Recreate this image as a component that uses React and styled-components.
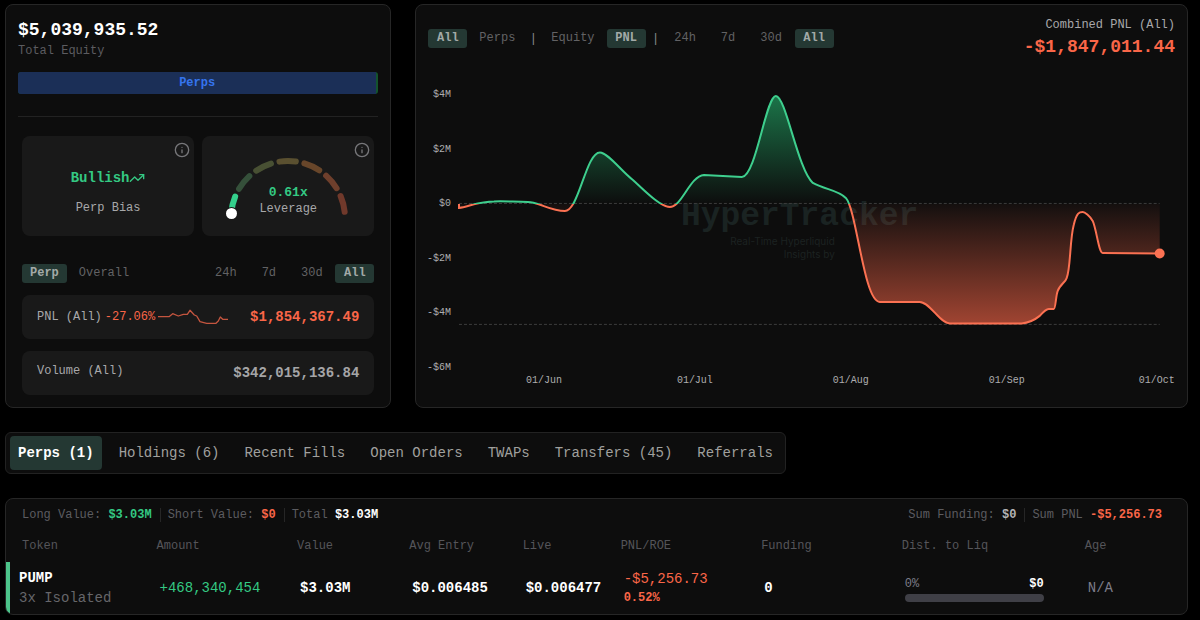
import React, { useState } from "react";
import styled, { createGlobalStyle } from "styled-components";
import { Info, TrendingUp } from "lucide-react";

const GlobalStyle = createGlobalStyle`
  * {
    box-sizing: border-box;
  }

  body {
    margin: 0;
    background: #000;
    color: #fff;
    font-family: "Liberation Mono", "DejaVu Sans Mono", monospace;
    font-size: 12px;
  }

  button {
    font-family: inherit;
    border: 0;
    background: none;
    cursor: pointer;
  }
`;

const GREEN = "#34c983";
const RED = "#fa6648";

const Page = styled.main`
  display: flex;
  flex-direction: column;
  align-items: flex-start;
  gap: 24px;
  padding: 4px 12px 4px 5px;
`;

const Top = styled.section`
  width: 100%;
  display: grid;
  grid-template-columns: 1fr 2fr;
  gap: 24px;

  @media (max-width: 900px) {
    grid-template-columns: 1fr;
  }
`;

const Card = styled.div`
  background: #0d0d0d;
  border: 1px solid #262626;
  border-radius: 8px;
  min-width: 0;
`;

const EquityCard = styled(Card)`
  padding: 12px;
`;

const BigValue = styled.div`
  font-size: 18px;
  line-height: 26px;
  font-weight: 700;
  color: ${(p) => p.$color || "#fff"};
`;

const Caption = styled.div`
  font-size: 12px;
  line-height: ${(p) => p.$line || 16}px;
  color: ${(p) => p.$color || "#5c5c60"};
`;

const SplitBar = styled.div`
  display: flex;
  height: 22px;
  margin-top: 13px;
  border-radius: 3px;
  overflow: hidden;
  background: #14532d;
`;

const SplitPart = styled.div`
  flex: 1;
  margin-right: 2px;
  line-height: 22px;
  text-align: center;
  font-weight: 700;
  color: #3574ee;
  background: #1b2f57;
`;

const Divider = styled.hr`
  height: 1px;
  margin: 22px 0 19px;
  border: 0;
  background: #222;
`;

const Inner = styled.div`
  padding: 0 4px;
`;

const Tiles = styled.div`
  display: grid;
  grid-template-columns: 1fr 1fr;
  gap: 8px;
`;

const Tile = styled.div`
  position: relative;
  height: 100px;
  padding-top: ${(p) => p.$top}px;
  display: flex;
  flex-direction: column;
  align-items: center;
  gap: 10px;
  border-radius: 8px;
  background: #191919;
`;

const TileInfo = styled(Info)`
  position: absolute;
  top: 6px;
  right: 4px;
  color: #77777a;
`;

const Bias = styled.div`
  display: flex;
  align-items: center;
  font-size: 14px;
  line-height: 20px;
  font-weight: 700;
  color: ${GREEN};
`;

const Gauge = styled.div`
  display: grid;
  justify-items: center;

  > * {
    grid-area: 1 / 1;
  }
`;

const GaugeText = styled.div`
  align-self: end;
  padding-bottom: 3px;
  text-align: center;
`;

const GaugeValue = styled.div`
  font-size: 13px;
  line-height: 16px;
  font-weight: 700;
  color: ${GREEN};
`;

const Toggles = styled.div`
  display: flex;
  justify-content: space-between;
  margin: 28px 0 12px;
`;

const Group = styled.div`
  display: flex;
  align-items: center;
  gap: 4px;
`;

const Pill = styled.button`
  min-width: 39px;
  height: 19px;
  padding: 0 8px;
  border-radius: 3px;
  font-size: 12px;
  line-height: 19px;
  font-weight: ${(p) => (p.$active ? 700 : 400)};
  color: ${(p) => (p.$active ? "#a3aaa8" : "#626264")};
  background: ${(p) => (p.$active ? "#243833" : "transparent")};
`;

const Bar = styled.span`
  width: 12px;
  text-align: center;
  color: #8a8a8c;
`;

const Stat = styled.div`
  display: flex;
  align-items: ${(p) => p.$align || "center"};
  height: 44px;
  padding: 10px 15px;
  border-radius: 8px;
  background: #191919;

  & + & {
    margin-top: 12px;
  }
`;

const StatLabel = styled.span`
  line-height: 20px;
  color: #a8a8aa;
`;

const StatChange = styled.span`
  margin: 0 3px;
  color: ${RED};
`;

const StatValue = styled.span`
  margin-left: auto;
  font-size: 14px;
  line-height: 24px;
  font-weight: 700;
  color: ${(p) => p.$color || "#a5a5a7"};
`;

const ChartCard = styled(Card)`
  overflow: hidden;
`;

const ChartHead = styled.div`
  display: flex;
  justify-content: space-between;
  align-items: flex-start;
  flex-wrap: wrap;
  padding: 11px 12px 20px;
`;

const Filters = styled(Group)`
  margin-top: 13px;
`;

const Summary = styled.div`
  text-align: right;
`;

const Chart = styled.svg`
  display: block;
  width: 100%;
`;

const AxisText = styled.text`
  font-size: 10px;
  fill: #adadaf;
`;

const Watermark = styled.text`
  font-size: 33px;
  font-weight: 700;
  fill: #1a2322;
`;

const WatermarkNote = styled.text`
  font-family: Inter, sans-serif;
  font-size: 10px;
  fill: #1c2221;
`;

const Tabs = styled.nav`
  display: flex;
  flex-wrap: wrap;
  gap: 9px;
  padding: 3px 4px;
  border: 1px solid #222;
  border-radius: 6px;
  background: #0d0d0d;
`;

const Tab = styled.button`
  height: 34px;
  padding: 0 8px;
  border-radius: 4px;
  font-size: 14px;
  font-weight: ${(p) => (p.$active ? 700 : 400)};
  color: ${(p) => (p.$active ? "#fff" : "#a0a09e")};
  background: ${(p) => (p.$active ? "#243833" : "transparent")};
`;

const Positions = styled(Card)`
  width: 100%;
  overflow: hidden;
`;

const Totals = styled.div`
  display: flex;
  justify-content: space-between;
  height: 31px;
  padding: 0 25px 0 16px;
`;

const TotalsGroup = styled.div`
  display: flex;
  align-items: center;
`;

const Total = styled.span`
  color: #5c5c60;

  & + & {
    margin-left: 8px;
    padding-left: 7px;
    border-left: 1px solid #262626;
  }

  b {
    color: ${(p) => p.$color || "#fff"};
  }
`;

const Table = styled.table`
  width: 100%;
  table-layout: fixed;
  border-collapse: collapse;
`;

const Th = styled.th`
  width: ${(p) => p.$width};
  height: 32px;
  padding: 0 0 0 10px;
  text-align: left;
  font-weight: 400;
  color: #55555a;

  &:first-child {
    padding-left: 16px;
  }
`;

const Td = styled.td`
  height: 52px;
  padding: 0 0 0 13px;
  font-size: 14px;
  line-height: 20px;
  font-weight: ${(p) => (p.$strong ? 700 : 400)};
  color: ${(p) => p.$color || "#fff"};
`;

const TokenCell = styled(Td)`
  padding-left: 9px;
  box-shadow: inset 4px 0 #4cc38a;
`;

const TokenName = styled.div`
  padding-left: 4px;
  font-weight: 700;
`;

const TokenMode = styled.div`
  padding-left: 4px;
  color: #66666a;
`;

const Roe = styled.div`
  font-size: 12px;
  line-height: 18px;
  font-weight: 700;
`;

const Liq = styled.div`
  width: 139px;
  max-width: 100%;
`;

const LiqText = styled.div`
  display: flex;
  justify-content: space-between;
  font-size: 12px;
  color: #7c7c88;

  b {
    color: #fff;
  }
`;

const LiqTrack = styled.div`
  height: 8px;
  border-radius: 4px;
  background: #3f3f46;
`;

const ranges = ["24h", "7d", "30d", "All"];

const gaugeColors = [
  "#34d08c",
  "#35503a",
  "#485033",
  "#5a5030",
  "#68462a",
  "#6e3f2c",
  "#70392b",
];

const yTicks = [
  ["$4M", 17],
  ["$2M", 72],
  ["$0", 126],
  ["-$2M", 181],
  ["-$4M", 235],
  ["-$6M", 290],
];

const xTicks = [
  ["01/Jun", 128],
  ["01/Jul", 279],
  ["01/Aug", 435],
  ["01/Sep", 591],
  ["01/Oct", 741],
];

const tabs = [
  "Perps (1)",
  "Holdings (6)",
  "Recent Fills",
  "Open Orders",
  "TWAPs",
  "Transfers (45)",
  "Referrals",
];

const columns = [
  ["Token", "11.9%"],
  ["Amount", "11.9%"],
  ["Value", "9.5%"],
  ["Avg Entry", "9.6%"],
  ["Live", "8.3%"],
  ["PNL/ROE", "11.9%"],
  ["Funding", "11.9%"],
  ["Dist. to Liq", "15.5%"],
  ["Age", "9.5%"],
];

const pnlLine =
  "M43 124V128C52 127 62 121.5 78 121.5C90 121 98 122 112 122C124 122.5 134 131 149 131" +
  "C163 131 170 72.5 184 72.5C192 72.5 206 92 217 100C226 108 244 127 254 127" +
  "C266 127 274 96 288 95L326 97C340 97 350 16 360 16C370 16 382 90 397 103" +
  "C410 110 422 110 430 118C441 130 448 222 464 222L504 222C514 222 524 243.5 534 243.5" +
  "L606 243.5C613 243 619 240 624 236Q630 229 633 229L638 229C640 229 640 216 642 211" +
  "C644 205 650 202 651 198C655 188 654 160 658 145C661 132 664 132 667 132" +
  "C669 132 674 136 677 141C681 150 683 173 687 173L744 173.5";

// angle is measured clockwise from the left end of the dial
const dialPoint = (deg) => {
  const a = (deg * Math.PI) / 180;
  return `${64 - 57 * Math.cos(a)} ${62 - 57 * Math.sin(a)}`;
};

const Dial = () => (
  <svg width="128" height="64" viewBox="0 0 128 64" aria-hidden="true">
    {gaugeColors.map((color, i) => {
      const start = 5.5 + i * 25.3;
      return (
        <path
          key={color}
          d={`M${dialPoint(start)}A57 57 0 0 1 ${dialPoint(start + 16.5)}`}
          fill="none"
          stroke={color}
          strokeWidth="6"
          strokeLinecap="round"
        />
      );
    })}
    <circle cx="7.5" cy="57.5" r="6.5" fill="#191919" />
    <circle cx="7.5" cy="57.5" r="5.5" fill="#fff" />
  </svg>
);

const RangePills = ({ value, onChange }) =>
  ranges.map((r) => (
    <Pill key={r} $active={r === value} onClick={() => onChange(r)}>
      {r}
    </Pill>
  ));

const PnlChart = () => (
  <Chart viewBox="0 0 771 327" role="img" aria-label="Combined PNL">
    <defs>
      <linearGradient id="gain" gradientUnits="userSpaceOnUse" x1="0" y1="16" x2="0" y2="124">
        <stop offset="0" stopColor="#22a565" stopOpacity="0.68" />
        <stop offset="1" stopColor="#22a565" stopOpacity="0" />
      </linearGradient>
      <linearGradient id="loss" gradientUnits="userSpaceOnUse" x1="0" y1="124" x2="0" y2="244">
        <stop offset="0" stopColor={RED} stopOpacity="0.03" />
        <stop offset="1" stopColor={RED} stopOpacity="0.62" />
      </linearGradient>
      <clipPath id="above">
        <rect x="0" y="0" width="771" height="124" />
      </clipPath>
      <clipPath id="below">
        <rect x="0" y="124" width="771" height="203" />
      </clipPath>
    </defs>

    <Watermark x="265" y="145">HyperTracker</Watermark>
    <WatermarkNote x="419" y="165" textAnchor="end">Real-Time Hyperliquid</WatermarkNote>
    <WatermarkNote x="419" y="178" textAnchor="end">Insights by</WatermarkNote>

    <g stroke="#3c3c3c" strokeDasharray="3 2">
      <path d="M43 123.5H744" />
      <path d="M43 244.5H744" />
    </g>

    <g clipPath="url(#above)">
      <path d={`${pnlLine}V124Z`} fill="url(#gain)" />
      <path d={pnlLine} fill="none" stroke="#3ecf8e" strokeWidth="2" />
    </g>
    <g clipPath="url(#below)">
      <path d={`${pnlLine}V124Z`} fill="url(#loss)" />
      <path d={pnlLine} fill="none" stroke="#fb7152" strokeWidth="2" />
    </g>
    <circle cx="744" cy="173.5" r="5" fill="#fb7152" />

    {yTicks.map(([label, y]) => (
      <AxisText key={label} x="35" y={y} textAnchor="end">
        {label}
      </AxisText>
    ))}
    {xTicks.map(([label, x]) => (
      <AxisText key={label} x={x} y="303" textAnchor="middle">
        {label}
      </AxisText>
    ))}
  </Chart>
);

const App = () => {
  const [scope, setScope] = useState("Perp");
  const [statRange, setStatRange] = useState("All");
  const [market, setMarket] = useState("All");
  const [metric, setMetric] = useState("PNL");
  const [chartRange, setChartRange] = useState("All");
  const [tab, setTab] = useState("Perps (1)");

  return (
    <Page>
      <GlobalStyle />
      <Top>
        <EquityCard>
          <BigValue>$5,039,935.52</BigValue>
          <Caption>Total Equity</Caption>
          <SplitBar>
            <SplitPart>Perps</SplitPart>
          </SplitBar>
          <Divider />
          <Inner>
            <Tiles>
              <Tile $top={32}>
                <TileInfo size={16} />
                <Bias>
                  Bullish
                  <TrendingUp size={16} />
                </Bias>
                <Caption $color="#a8a8aa" $line={20}>
                  Perp Bias
                </Caption>
              </Tile>
              <Tile $top={20}>
                <TileInfo size={16} />
                <Gauge>
                  <Dial />
                  <GaugeText>
                    <GaugeValue>0.61x</GaugeValue>
                    <Caption $color="#a8a8aa">Leverage</Caption>
                  </GaugeText>
                </Gauge>
              </Tile>
            </Tiles>

            <Toggles>
              <Group>
                {["Perp", "Overall"].map((s) => (
                  <Pill key={s} $active={s === scope} onClick={() => setScope(s)}>
                    {s}
                  </Pill>
                ))}
              </Group>
              <Group>
                <RangePills value={statRange} onChange={setStatRange} />
              </Group>
            </Toggles>

            <Stat>
              <StatLabel>PNL (All)</StatLabel>
              <StatChange>-27.06%</StatChange>
              <svg width="70" height="16" viewBox="0 0 70 16" aria-hidden="true">
                <path
                  d="M0 7.7H11L14.7 4.7L20.3 7L25.3 5.3H29.3L32 1.3L36.3 6L38.7 7L42 12.7L48.7 14.3H58L60.3 12L62.3 8L64.7 10.3H70"
                  fill="none"
                  stroke="#c4553f"
                  strokeWidth="1.3"
                  strokeLinejoin="round"
                />
              </svg>
              <StatValue $color={RED}>$1,854,367.49</StatValue>
            </Stat>
            <Stat $align="flex-start">
              <StatLabel>Volume (All)</StatLabel>
              <StatValue>$342,015,136.84</StatValue>
            </Stat>
          </Inner>
        </EquityCard>

        <ChartCard>
          <ChartHead>
            <Filters>
              {["All", "Perps"].map((m) => (
                <Pill key={m} $active={m === market} onClick={() => setMarket(m)}>
                  {m}
                </Pill>
              ))}
              <Bar>|</Bar>
              {["Equity", "PNL"].map((m) => (
                <Pill key={m} $active={m === metric} onClick={() => setMetric(m)}>
                  {m}
                </Pill>
              ))}
              <Bar>|</Bar>
              <RangePills value={chartRange} onChange={setChartRange} />
            </Filters>
            <Summary>
              <Caption $color="#a8a8aa" $line={18}>
                Combined PNL (All)
              </Caption>
              <BigValue $color={RED}>-$1,847,011.44</BigValue>
            </Summary>
          </ChartHead>
          <PnlChart />
        </ChartCard>
      </Top>

      <Tabs>
        {tabs.map((t) => (
          <Tab key={t} $active={t === tab} onClick={() => setTab(t)}>
            {t}
          </Tab>
        ))}
      </Tabs>

      <Positions>
        <Totals>
          <TotalsGroup>
            <Total $color={GREEN}>
              Long Value: <b>$3.03M</b>
            </Total>
            <Total $color={RED}>
              Short Value: <b>$0</b>
            </Total>
            <Total>
              Total <b>$3.03M</b>
            </Total>
          </TotalsGroup>
          <TotalsGroup>
            <Total $color="#b4b4b6">
              Sum Funding: <b>$0</b>
            </Total>
            <Total $color={RED}>
              Sum PNL <b>-$5,256.73</b>
            </Total>
          </TotalsGroup>
        </Totals>
        <Table>
          <thead>
            <tr>
              {columns.map(([name, width]) => (
                <Th key={name} scope="col" $width={width}>
                  {name}
                </Th>
              ))}
            </tr>
          </thead>
          <tbody>
            <tr>
              <TokenCell>
                <TokenName>PUMP</TokenName>
                <TokenMode>3x Isolated</TokenMode>
              </TokenCell>
              <Td $color={GREEN}>+468,340,454</Td>
              <Td $strong>$3.03M</Td>
              <Td $strong>$0.006485</Td>
              <Td $strong>$0.006477</Td>
              <Td $color={RED}>
                -$5,256.73
                <Roe>0.52%</Roe>
              </Td>
              <Td $strong>0</Td>
              <Td>
                <Liq>
                  <LiqText>
                    0% <b>$0</b>
                  </LiqText>
                  <LiqTrack />
                </Liq>
              </Td>
              <Td $color="#7c7c88">N/A</Td>
            </tr>
          </tbody>
        </Table>
      </Positions>
    </Page>
  );
};

export default App;
